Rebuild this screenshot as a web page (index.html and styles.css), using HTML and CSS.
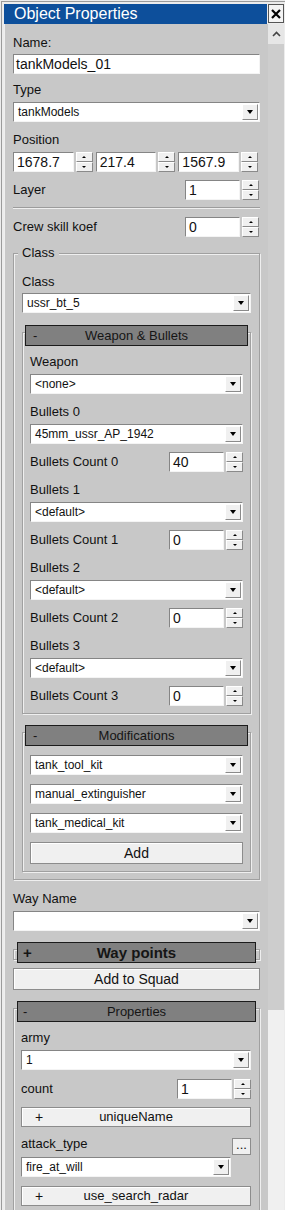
FILE: index.html
```html
<!DOCTYPE html>
<html lang="en">
<head>
  <meta charset="UTF-8">
  <title>Object Properties</title>
  <link rel="stylesheet" href="styles.css">
</head>
<body>

<div class="window">
  <div class="titlebar">
    <div class="title">Object Properties</div>
    <div class="close">
      <svg width="10" height="10" viewBox="0 0 10 10"><path d="M1 1L9 9M9 1L1 9" stroke="#000" stroke-width="2.2"/></svg>
    </div>
  </div>

  <div class="main">
    <div class="panel">
      <div class="label">Name:</div>
      <div class="text mt3">tankModels_01</div>

      <div class="label mt8">Type</div>
      <div class="combo mt4"><span class="val">tankModels</span><span class="drop"></span></div>

      <div class="label mt10">Position</div>
      <div class="pos-row mt4">
        <div class="spin"><span class="num">1678.7</span><span class="arrows"><i class="up"></i><i class="dn"></i></span></div>
        <div class="spin"><span class="num">217.4</span><span class="arrows"><i class="up"></i><i class="dn"></i></span></div>
        <div class="spin"><span class="num">1567.9</span><span class="arrows"><i class="up"></i><i class="dn"></i></span></div>
      </div>

      <div class="row top mt8">
        <span class="label">Layer</span>
        <div class="spin small"><span class="num">1</span><span class="arrows"><i class="up"></i><i class="dn"></i></span></div>
      </div>

      <div class="sep"></div>

      <div class="row top mt8">
        <span class="label">Crew skill koef</span>
        <div class="spin small"><span class="num">0</span><span class="arrows"><i class="up"></i><i class="dn"></i></span></div>
      </div>

      <!-- Class group -->
      <div class="groupbox">
        <div class="legend">Class</div>
        <div class="label mt13">Class</div>
        <div class="combo mt3"><span class="val">ussr_bt_5</span><span class="drop"></span></div>

        <div class="frame weapon">
          <div class="head"><span class="sign">-</span><span class="cap">Weapon &amp; Bullets</span></div>

          <div class="label mt8">Weapon</div>
          <div class="combo mt4"><span class="val">&lt;none&gt;</span><span class="drop"></span></div>

          <div class="label mt10">Bullets 0</div>
          <div class="combo mt4"><span class="val">45mm_ussr_AP_1942</span><span class="drop"></span></div>
          <div class="row mt8">
            <span class="label">Bullets Count 0</span>
            <div class="spin small"><span class="num">40</span><span class="arrows"><i class="up"></i><i class="dn"></i></span></div>
          </div>

          <div class="label mt10">Bullets 1</div>
          <div class="combo mt4"><span class="val">&lt;default&gt;</span><span class="drop"></span></div>
          <div class="row mt8">
            <span class="label">Bullets Count 1</span>
            <div class="spin small"><span class="num">0</span><span class="arrows"><i class="up"></i><i class="dn"></i></span></div>
          </div>

          <div class="label mt10">Bullets 2</div>
          <div class="combo mt4"><span class="val">&lt;default&gt;</span><span class="drop"></span></div>
          <div class="row mt8">
            <span class="label">Bullets Count 2</span>
            <div class="spin small"><span class="num">0</span><span class="arrows"><i class="up"></i><i class="dn"></i></span></div>
          </div>

          <div class="label mt10">Bullets 3</div>
          <div class="combo mt4"><span class="val">&lt;default&gt;</span><span class="drop"></span></div>
          <div class="row mt8">
            <span class="label">Bullets Count 3</span>
            <div class="spin small"><span class="num">0</span><span class="arrows"><i class="up"></i><i class="dn"></i></span></div>
          </div>
        </div>

        <div class="frame mods">
          <div class="head"><span class="sign">-</span><span class="cap">Modifications</span></div>
          <div class="combo mt9"><span class="val">tank_tool_kit</span><span class="drop"></span></div>
          <div class="combo mt9"><span class="val">manual_extinguisher</span><span class="drop"></span></div>
          <div class="combo mt9"><span class="val">tank_medical_kit</span><span class="drop"></span></div>
          <div class="btn mt9">Add</div>
        </div>
      </div>

      <div class="label mt11">Way Name</div>
      <div class="combo mt4"><span class="val"></span><span class="drop"></span></div>

      <div class="frame outer collapsed">
        <div class="head bold"><span class="sign">+</span><span class="cap">Way points</span></div>
      </div>

      <div class="btn mt8">Add to Squad</div>

      <!-- Properties -->
      <div class="frame outer props">
        <div class="head"><span class="sign">-</span><span class="cap">Properties</span></div>

        <div class="label mt8">army</div>
        <div class="combo mt4"><span class="val">1</span><span class="drop"></span></div>

        <div class="row mt9">
          <span class="label">count</span>
          <div class="spin small"><span class="num">1</span><span class="arrows"><i class="up"></i><i class="dn"></i></span></div>
        </div>

        <div class="btn toggle mt8"><span class="sign">+</span><span class="cap">uniqueName</span></div>

        <div class="attack">
          <div class="attack-main">
            <div class="label">attack_type</div>
            <div class="combo mt5"><span class="val">fire_at_will</span><span class="drop"></span></div>
          </div>
          <div class="dots">...</div>
        </div>

        <div class="btn toggle mt9"><span class="sign">+</span><span class="cap">use_search_radar</span></div>
      </div>
    </div>

    <div class="scrollbar">
      <div class="sb-up">
        <svg width="9" height="6" viewBox="0 0 9 6"><path d="M1 5L4.5 1.5L8 5" fill="none" stroke="#444" stroke-width="1.6"/></svg>
      </div>
      <div class="sb-thumb"></div>
    </div>
  </div>
</div>

</body>
</html>
```

FILE: styles.css
```css
body {
  margin: 0;
  width: 285px;
  height: 1210px;
  overflow: hidden;
  background: #ececec;
  font-family: "Liberation Sans", Arial, sans-serif;
  color: #111;
}

.window {
  margin: 1px 0 0 1px;
  border-left: 1px solid #9b9b9b;
  border-top: 1px solid #9b9b9b;
  padding: 2px 1px 0 2px;
  height: 1209px;
  box-sizing: border-box;
  display: flex;
  flex-direction: column;
}

/* title bar */
.titlebar {
  display: flex;
  height: 20px;
}

.title {
  flex: 1;
  background: #0d4f9b;
  color: #fff;
  font-size: 16px;
  line-height: 20px;
  padding-left: 10px;
}

.close {
  width: 16px;
  height: 19px;
  margin-left: 1px;
  box-sizing: border-box;
  background: #f4f4f4;
  border: 1px solid #555;
  display: flex;
  align-items: center;
  justify-content: center;
}

.main {
  flex: 1;
  display: flex;
  overflow: hidden;
}

.panel {
  width: 264px;
  box-sizing: border-box;
  border-left: 1px solid #efefef;
  padding: 11px 8px 0;
  background: #c8c8c8;
}

/* scrollbar */
.scrollbar {
  flex: 1;
  display: flex;
  flex-direction: column;
  background: #f0f0f0;
}

.sb-up {
  height: 20px;
  background: #e6e6e6;
  display: flex;
  align-items: center;
  justify-content: center;
}

.sb-thumb {
  height: 966px;
  background: #cdcdcd;
}

/* spacing helpers */
.mt3 { margin-top: 3px; }
.mt4 { margin-top: 4px; }
.mt5 { margin-top: 5px; }
.mt8 { margin-top: 8px; }
.mt9 { margin-top: 9px; }
.mt10 { margin-top: 10px; }
.mt11 { margin-top: 11px; }
.mt13 { margin-top: 13px; }

.label {
  font-size: 13px;
  line-height: 16px;
}

.text {
  height: 20px;
  box-sizing: border-box;
  background: #fff;
  border: 1px solid;
  border-color: #858585 #f4f4f4 #f4f4f4 #858585;
  font-size: 14px;
  line-height: 18px;
  padding-left: 2px;
}

/* combo box */
.combo {
  display: flex;
  align-items: center;
  height: 20px;
  box-sizing: border-box;
  background: #fff;
  border: 1px solid;
  border-color: #858585 #f4f4f4 #f4f4f4 #858585;
  padding: 1px;
  font-size: 12px;
}

.combo .val {
  flex: 1;
  padding-left: 3px;
  white-space: nowrap;
}

.drop {
  width: 16px;
  height: 16px;
  box-sizing: border-box;
  background: #f0f0f0;
  border: 1px solid;
  border-color: #fff #8a8a8a #8a8a8a #fff;
  display: flex;
  align-items: center;
  justify-content: center;
}

.drop::after {
  content: "";
  border-left: 3.5px solid transparent;
  border-right: 3.5px solid transparent;
  border-top: 4px solid #000;
}

/* spin edit */
.pos-row {
  display: flex;
  gap: 3px;
  margin-right: 2px;
}

.spin {
  flex: 1;
  display: flex;
  height: 20px;
}

.spin.small {
  flex: none;
  width: 74px;
}

.row.top .spin.small {
  margin-right: 1px;
}

.num {
  flex: 1;
  min-width: 0;
  box-sizing: border-box;
  background: #fff;
  border: 1px solid;
  border-color: #858585 #f4f4f4 #f4f4f4 #858585;
  font-size: 14px;
  line-height: 18px;
  padding-left: 3px;
}

.arrows {
  width: 17px;
  margin-left: 2px;
  display: flex;
  flex-direction: column;
}

.arrows i {
  flex: 1;
  background: #f0f0f0;
  border: 1px solid;
  border-color: #fff #8a8a8a #8a8a8a #fff;
  display: flex;
  align-items: center;
  justify-content: center;
}

.arrows .up::after {
  content: "";
  border-left: 2px solid transparent;
  border-right: 2px solid transparent;
  border-bottom: 2px solid #000;
}

.arrows .dn::after {
  content: "";
  border-left: 2px solid transparent;
  border-right: 2px solid transparent;
  border-top: 2px solid #000;
}

.row {
  display: flex;
  justify-content: space-between;
  align-items: center;
}

.sep {
  margin-top: 7px;
  border-top: 1px solid #9c9c9c;
  border-bottom: 1px solid #efefef;
}

/* group boxes */
.groupbox,
.frame {
  border: 1px solid #a0a0a0;
  box-shadow: inset 1px 1px 0 #efefef, 1px 1px 0 #efefef;
}

.groupbox {
  margin-top: 16px;
  padding: 0 8px 7px;
}

.legend {
  width: fit-content;
  margin: -9px 0 0 -4px;
  padding: 0 4px;
  background: #c8c8c8;
  font-size: 13px;
  line-height: 16px;
}

.frame {
  padding: 0 7px 7px;
}

.frame.weapon {
  margin-top: 19px;
}

.frame.mods {
  margin-top: 18px;
}

.frame.outer {
  margin-top: 18px;
  padding: 0 8px 0 7px;
}

.frame.collapsed {
  height: 11px;
  box-sizing: border-box;
}

.frame.props {
  border-bottom: none;
  height: 300px;
}

.head {
  display: grid;
  grid-template-columns: 1fr auto 1fr;
  height: 21px;
  box-sizing: border-box;
  margin: -8px -5px 0;
  background: #808080;
  border: 1px solid #1b1b1b;
  font-size: 13px;
  line-height: 19px;
  color: #151515;
}

.frame.outer .head {
  margin: -8px -5px 0 -4px;
}

.head .sign {
  padding-left: 7px;
}

.frame.outer .head .sign {
  padding-left: 5px;
}

.head.bold {
  font-weight: bold;
  font-size: 15px;
}

.head.bold .sign {
  padding-left: 2px;
}

/* buttons */
.btn {
  height: 22px;
  box-sizing: border-box;
  background: #f0f0f0;
  border: 1px solid #8c8c8c;
  box-shadow: inset 1px 1px 0 #fff;
  font-size: 14px;
  line-height: 20px;
  text-align: center;
}

.btn.toggle {
  display: grid;
  grid-template-columns: 1fr auto 1fr;
  height: 20px;
  font-size: 13px;
  line-height: 18px;
  text-align: left;
}

.btn.toggle .sign {
  padding-left: 13px;
  font-size: 14px;
}

.attack {
  display: flex;
  margin-top: 9px;
}

.attack-main {
  flex: 1;
}

.dots {
  width: 19px;
  height: 17px;
  margin: 2px 0 0 1px;
  box-sizing: border-box;
  background: #f0f0f0;
  border: 1px solid #8c8c8c;
  font-size: 13px;
  line-height: 12px;
  text-align: center;
}
```
